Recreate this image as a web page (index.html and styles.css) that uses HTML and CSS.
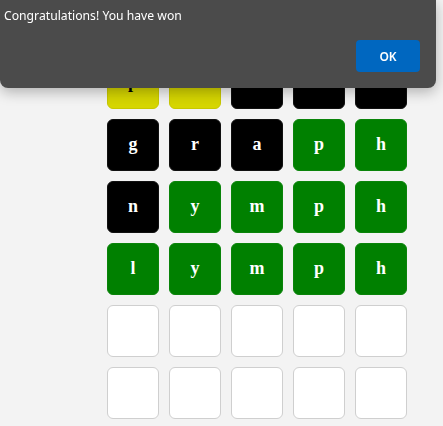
FILE: index.html
```html
<!DOCTYPE html>
<html>
<head>
<meta charset="utf-8">
<link rel="stylesheet" href="styles.css">
</head>
<body>
<main class="board">
  <div class="row">
    <div class="tile yellow">p</div><div class="tile yellow">l</div><div class="tile black">a</div><div class="tile black">n</div><div class="tile black">t</div>
  </div>
  <div class="row">
    <div class="tile black">g</div><div class="tile black">r</div><div class="tile black">a</div><div class="tile green">p</div><div class="tile green">h</div>
  </div>
  <div class="row">
    <div class="tile black">n</div><div class="tile green">y</div><div class="tile green">m</div><div class="tile green">p</div><div class="tile green">h</div>
  </div>
  <div class="row">
    <div class="tile green">l</div><div class="tile green">y</div><div class="tile green">m</div><div class="tile green">p</div><div class="tile green">h</div>
  </div>
  <div class="row">
    <div class="tile"></div><div class="tile"></div><div class="tile"></div><div class="tile"></div><div class="tile"></div>
  </div>
  <div class="row">
    <div class="tile"></div><div class="tile"></div><div class="tile"></div><div class="tile"></div><div class="tile"></div>
  </div>
</main>
<div class="dialog">
  <p class="message">Congratulations! You have won</p>
  <div class="actions"><button class="ok">OK</button></div>
</div>
</body>
</html>
```
FILE: styles.css
```css
html, body {
  margin: 0;
  padding: 0;
  background: #f3f3f3;
  height: 100%;
  overflow: hidden;
}
.board {
  display: flex;
  flex-direction: column;
  gap: 10px;
  padding: 57px 0 0 107px;
}
.row {
  display: flex;
  gap: 10px;
}
.tile {
  box-sizing: border-box;
  width: 52px;
  height: 52px;
  border: 1px solid #cfcfcf;
  border-radius: 6px;
  background: #fff;
  display: flex;
  align-items: center;
  justify-content: center;
  padding-bottom: 3px;
  font-family: "Liberation Serif", serif;
  font-weight: bold;
  font-size: 18px;
  line-height: 20px;
  color: #fff;
}
.tile.green { background: #008000; border-color: #0a840a; }
.tile.black { background: #000; border-color: #111; }
.tile.yellow { background: #d6d600; border-color: #c8c800; color: #000; }
.dialog {
  position: fixed;
  top: 0;
  left: 0;
  width: 436px;
  height: 88px;
  box-sizing: border-box;
  background: #4b4b4b;
  border-radius: 0 0 8px 8px;
  box-shadow: 0 4px 14px rgba(0,0,0,0.28);
  padding: 7px 16px 0 4px;
  font-family: "Noto Sans", "Open Sans", sans-serif;
}
.message {
  margin: 0;
  color: #fff;
  font-size: 12.2px;
  line-height: 18px;
}
.actions {
  display: flex;
  justify-content: flex-end;
  margin-top: 15px;
}
.ok {
  width: 64px;
  height: 32px;
  border: none;
  border-radius: 4px;
  background: #0067c0;
  color: #fff;
  font-family: "Noto Sans", "Open Sans", sans-serif;
  font-size: 12px;
  font-weight: 600;
  padding: 0;
}
```
